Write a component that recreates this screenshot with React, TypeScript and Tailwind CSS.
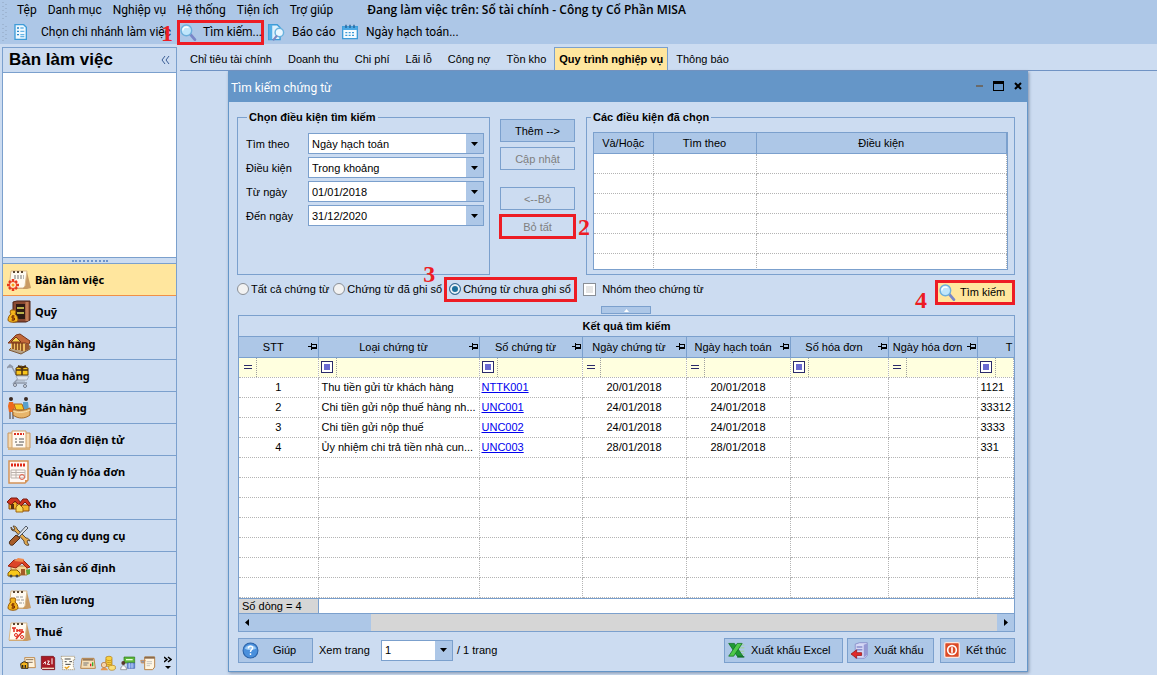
import type { ReactNode } from "react";
import { clsx } from "clsx";

const menuItems = ["Tệp", "Danh mục", "Nghiệp vụ", "Hệ thống", "Tiện ích", "Trợ giúp"];

const tabs = [
  "Chỉ tiêu tài chính",
  "Doanh thu",
  "Chi phí",
  "Lãi lỗ",
  "Công nợ",
  "Tồn kho",
  "Quy trình nghiệp vụ",
  "Thông báo",
];

const conditions = [
  { id: "field", label: "Tìm theo", value: "Ngày hạch toán" },
  { id: "operator", label: "Điều kiện", value: "Trong khoảng" },
  { id: "from", label: "Từ ngày", value: "01/01/2018" },
  { id: "to", label: "Đến ngày", value: "31/12/2020" },
];

const columns = [
  { name: "STT", filter: "equal" },
  { name: "Loại chứng từ", filter: "box" },
  { name: "Số chứng từ", filter: "box" },
  { name: "Ngày chứng từ", filter: "equal" },
  { name: "Ngày hạch toán", filter: "equal" },
  { name: "Số hóa đơn", filter: "box" },
  { name: "Ngày hóa đơn", filter: "equal" },
];

const vouchers = [
  { type: "Thu tiền gửi từ khách hàng", no: "NTTK001", date: "20/01/2018", account: "1121" },
  { type: "Chi tiền gửi nộp thuế hàng nh...", no: "UNC001", date: "24/01/2018", account: "33312" },
  { type: "Chi tiền gửi nộp thuế", no: "UNC002", date: "24/01/2018", account: "3333" },
  { type: "Ủy nhiệm chi trả tiền nhà cun...", no: "UNC003", date: "28/01/2018", account: "331" },
];

/* ---------- Icons ---------- */

function Svg({ size = 24, children }: { size?: number; children: ReactNode }) {
  return (
    <svg width={size} height={size} viewBox="0 0 24 24" fill="none" className="shrink-0" aria-hidden="true">
      {children}
    </svg>
  );
}

function Calendar() {
  return (
    <>
      <path d="M4 4h16l4 16-4 1H2z" fill="#c99a62" />
      <path d="M4 3h16l-2 15-2 2H2z" fill="#fffaf0" stroke="#d9b98a" />
      <path d="M6 4h2M10 4h2M14 4h2" stroke="#5c4630" strokeWidth="2" />
    </>
  );
}

function MoneyBag() {
  return (
    <>
      <path d="M3 12l1-2h4l1 2-1 2c2 1 3 4 3 6 0 3-10 3-10 0 0-2 1-5 3-6z" fill="#f4b41c" stroke="#9a5c0a" />
      <path d="M7.500 16H5v2h2.500v2H4.500M6 15v6" stroke="#7a2c00" />
    </>
  );
}

const moduleIcons = {
  desk: (
    <>
      <Calendar />
      <path d="M7 8h10M7 10h10" stroke="#777" strokeDasharray="2 1" />
      <g stroke="#e8381b" strokeWidth="2.500">
        <path d="M6 11v12M0 17h12M2 13l8 8M10 13l-8 8" />
      </g>
      <circle cx="6" cy="17" r="3.500" fill="#fff3d0" stroke="#e8381b" />
      <circle cx="6" cy="17" r="1.500" fill="#f4a01c" />
    </>
  ),
  safe: (
    <>
      <path d="M6 2l4-1h13v19l-4 2H6z" fill="#8b4a32" stroke="#4c2316" />
      <path d="M9 4h9v15H9z" fill="#2e1a14" />
      <path d="M10 8h7M10 13h7" stroke="#b8b04a" strokeWidth="2" />
      <path d="M20 2v19" stroke="#c07a55" strokeWidth="3" />
      <MoneyBag />
    </>
  ),
  bank: (
    <>
      <path d="M2 18l12 4 9-5v-3L5 15z" fill="#b7a184" stroke="#7d5a38" />
      <path d="M4 10h14v9L4 17z" fill="#f1c063" />
      <path d="M6 10v7M9 10v8M12 10v8M15 10v9" stroke="#7b3c14" strokeWidth="1.500" />
      <path d="M1 11l8-8 4-1 10 7-1 3-4-1z" fill="#c2693b" stroke="#7a3518" />
      <path d="M4 10l5-5 5 5z" fill="#f7d64b" stroke="#7a3518" />
      <path d="M18 12l4-1v6l-4 2z" fill="#9c5a30" />
    </>
  ),
  cart: (
    <>
      <path d="M0 4l3-3 3 2M1 3h4l6 11h10M12 14l-5 5h13M9 8l2 6" stroke="#8f98a8" strokeWidth="1.500" />
      <path d="M9 12h13l-2 4h-9zM10 17h8" fill="#dfe4ec" stroke="#a4adbb" />
      <path d="M9 4l5-2 7 2v7H9z" fill="#f8c51c" stroke="#5b3a08" />
      <path d="M15 3v8M9 6h12" stroke="#4b2e10" strokeWidth="1.500" />
      <path d="M11 2l4 2 4-2" stroke="#4b2e10" strokeWidth="2" />
      <circle cx="8" cy="21" r="1.500" fill="#dfe4ec" stroke="#70798a" />
      <circle cx="18" cy="22" r="1.500" fill="#dfe4ec" stroke="#70798a" />
    </>
  ),
  sell: (
    <>
      <circle cx="4" cy="3" r="2" fill="#3b2a22" />
      <path d="M2 6h4l2 5-1 5H2L1 10z" fill="#ee6a1e" />
      <path d="M3 16v7M6 16v7" stroke="#40302a" />
      <circle cx="19" cy="3" r="2" fill="#3b2a22" />
      <path d="M16 6h5l1 8h-6z" fill="#5aa0cc" />
      <path d="M7 8h8l2 6H9z" fill="#f6cc2a" stroke="#b5651a" />
      <path d="M6 13c4 2 11 2 17-1v7c-5 4-12 4-17 0z" fill="#e7b56b" stroke="#a56a2a" />
      <path d="M6 15c4 2 11 2 17-1" stroke="#fbe2ae" />
    </>
  ),
  einvoice: (
    <>
      <path d="M1 5h5v15H1zM18 5h5v15h-5z" fill="#f5d9b0" stroke="#c9965c" />
      <path d="M5 3h14v17H5z" fill="#fffaf2" stroke="#d2a46c" />
      <path d="M7 6h10" stroke="#dc3020" strokeWidth="2" strokeDasharray="2 1" />
      <path d="M8 11h2M12 11h5M8 14h2M12 14h5M9 17h7" stroke="#555" />
      <path d="M1 21h22" stroke="#d9b27c" strokeWidth="2" />
    </>
  ),
  invoice: (
    <>
      <path d="M2 1h19v19l-3 3H2z" fill="#fff8f4" stroke="#d39358" strokeWidth="1.500" />
      <path d="M4 5h15" stroke="#e02818" strokeWidth="3" strokeDasharray="2 1" />
      <path d="M4 10h14v8H4zM4 12.500h14M4 15h14M9 10v8" stroke="#bbb2ac" />
      <circle cx="15" cy="17" r="2.500" stroke="#e2604a" />
      <path d="M18 23v-3h3z" fill="#d39358" />
    </>
  ),
  stock: (
    <>
      <path d="M2 10h8v7H2z" fill="#f3b42a" stroke="#8c4a10" />
      <path d="M0 10l4-4h6l4 5-2 2-4-4-4 4z" fill="#cf3420" stroke="#7a1a0e" />
      <path d="M4 12h3v5H4z" fill="#5b3010" />
      <path d="M14 13h8v6h-8z" fill="#f3b42a" stroke="#8c4a10" />
      <path d="M12 12l4-5h4l4 6-2 1-4-4-4 4z" fill="#cf3420" stroke="#7a1a0e" />
      <path d="M9 15l3-3 4 4v4H9z" fill="#f8d85c" stroke="#a0640e" />
    </>
  ),
  tools: (
    <>
      <path
        d="M4 3c0 3 1 4 4 4l9 10c0 3 2 5 5 4l-2-3 1-2 2 1c-1-2-2-3-4-3L10 5c0-2-2-3-4-3l2 3-2 1z"
        fill="#e3a94c"
        stroke="#5a4a38"
      />
      <path d="M19 2l2 2-9 9-2-1z" fill="#dbe0e6" stroke="#4f5966" />
      <path d="M9 11l4 3-7 7c-2 1-5-1-3-4z" fill="#a85c28" stroke="#4c2e18" />
    </>
  ),
  asset: (
    <>
      <path d="M4 10h16v9H4z" fill="#f5d495" stroke="#b07a3a" />
      <path d="M1 10l6-6h9l7 7-3 1-5-5-6 5z" fill="#dc4428" stroke="#9a2412" />
      <path d="M7 5l4-3 6 1-1 3z" fill="#f08a4c" />
      <path d="M14 13h4v6h-4z" fill="#a45c28" />
      <path d="M19 14l4-1v5l-3 1z" fill="#58a838" />
      <path d="M1 17l3-3h6l3 3v3H1z" fill="#f8c81c" stroke="#8a5c08" />
      <circle cx="4" cy="20" r="1.500" fill="#444" />
      <circle cx="10" cy="20" r="1.500" fill="#444" />
    </>
  ),
  salary: (
    <>
      <Calendar />
      <path d="M9 9h8M10 12h7M12 15h5" stroke="#999" strokeDasharray="3 1" />
      <MoneyBag />
    </>
  ),
  tax: (
    <>
      <Calendar />
      <path d="M5 8h4M7 8v4M10 9v3M10 10.500h3M13 9v3M15 9v3h2" stroke="#e22a1a" strokeWidth="1.500" />
      <path d="M15 12l-6 7" stroke="#e22a1a" strokeWidth="1.500" />
      <circle cx="9" cy="15" r="1.500" stroke="#e22a1a" />
      <circle cx="15" cy="17" r="1.500" stroke="#e22a1a" />
    </>
  ),
};

const modules: { name: string; icon: keyof typeof moduleIcons }[] = [
  { name: "Bàn làm việc", icon: "desk" },
  { name: "Quỹ", icon: "safe" },
  { name: "Ngân hàng", icon: "bank" },
  { name: "Mua hàng", icon: "cart" },
  { name: "Bán hàng", icon: "sell" },
  { name: "Hóa đơn điện tử", icon: "einvoice" },
  { name: "Quản lý hóa đơn", icon: "invoice" },
  { name: "Kho", icon: "stock" },
  { name: "Công cụ dụng cụ", icon: "tools" },
  { name: "Tài sản cố định", icon: "asset" },
  { name: "Tiền lương", icon: "salary" },
  { name: "Thuế", icon: "tax" },
];

const shortcuts: { name: string; icon: ReactNode }[] = [
  {
    name: "Giá thành",
    icon: (
      <>
        <path d="M7 4h15l1 15H9z" fill="#fff4dc" stroke="#c08a4c" strokeWidth="1.500" />
        <path d="M9 7h11M11 11h8" stroke="#8a7258" strokeWidth="1.500" />
        <path d="M1 13l5-3 6 2v8H2z" fill="#f4b41c" stroke="#3a2a10" strokeWidth="1.500" />
        <path d="M4 15v4M8 15v4" stroke="#222" strokeWidth="2" />
      </>
    ),
  },
  {
    name: "Sổ cái",
    icon: (
      <>
        <path d="M2 2h18l2 2v18H4l-2-2z" fill="#a81a24" stroke="#6e0c14" />
        <path d="M3 20h18" stroke="#f1d8c0" strokeWidth="2" />
        <path d="M5 13l3-3v4M11 9h3l-3 5h4M18 5v9" stroke="#fff" strokeWidth="1.500" />
      </>
    ),
  },
  {
    name: "Hợp đồng",
    icon: (
      <>
        <path d="M2 2h20v5h-2v10l2 5H4V7H2z" fill="#fffdf4" stroke="#8d7650" strokeDasharray="2 1" />
        <path d="M7 6h9M7 10h3M14 10h4M8 14h8" stroke="#444" strokeWidth="1.500" />
        <path d="M7 18l3 2 4-3" stroke="#e8a01c" strokeWidth="2" />
      </>
    ),
  },
  {
    name: "Ngân sách",
    icon: (
      <>
        <path d="M3 5h18l2 15H1z" fill="#f6e0b8" stroke="#b98448" strokeWidth="1.500" />
        <path d="M4 7h16" stroke="#9a7a58" strokeWidth="3" />
        <path d="M5 12h8M5 15h6" stroke="#777" strokeWidth="1.500" />
        <path d="M15 13h2v4h-2z" fill="#d22" />
        <path d="M18 11h2v6h-2z" fill="#3a3" />
      </>
    ),
  },
  {
    name: "Thủ quỹ",
    icon: (
      <>
        <path d="M9 3c4-2 9-1 9 1v13H8z" fill="#f8d040" stroke="#b07a10" />
        <path d="M9 7c3 2 7 2 9 0M9 10c3 2 7 2 9 0M9 13c3 2 7 2 9 0" stroke="#b07a10" />
        <circle cx="6" cy="15" r="4" fill="#f6d4a8" stroke="#a4642c" />
        <path d="M1 23c0-5 10-5 11 0z" fill="#e8964c" />
        <path d="M13 17c3-2 9-2 10 0v4c-3 3-9 2-10 0z" fill="#fbe07a" stroke="#b07a10" />
      </>
    ),
  },
  {
    name: "Thủ kho",
    icon: (
      <>
        <path d="M6 3h16v9H6z" fill="#5cb83c" stroke="#2f7a1a" />
        <path d="M9 7h10" stroke="#e8ffd8" strokeWidth="2" />
        <path d="M11 12h11v8H11z" fill="#7a9ce0" stroke="#3c5caa" />
        <path d="M14 12v8M18 12v8" stroke="#dce6ff" />
        <circle cx="5" cy="12" r="3" fill="#5a3a2a" />
        <path d="M1 22c0-8 8-8 9 0z" fill="#fafafa" stroke="#777" />
      </>
    ),
  },
  {
    name: "Nhật ký",
    icon: (
      <>
        <path d="M7 3h15v15l-3 4H7z" fill="#fff6e4" stroke="#b98448" strokeWidth="1.500" />
        <path d="M7 4h15" stroke="#8d6b4a" strokeWidth="3" />
        <path d="M10 10h8M10 13h8M10 16h5" stroke="#aaa" />
        <path d="M1 8h7l-2 4H2z" fill="#8a98b0" stroke="#e08a3a" />
      </>
    ),
  },
];

function SearchIcon() {
  return (
    <Svg size={17}>
      <path d="M15 15l6 7" stroke="#7a86c8" strokeWidth="4" strokeLinecap="round" />
      <circle cx="9" cy="9" r="7.500" fill="#bfe6fb" stroke="#6db0dc" strokeWidth="2" />
      <path d="M4 9c0-4 4-6 8-4" stroke="#fff" strokeWidth="2" />
    </Svg>
  );
}

function BranchIcon() {
  return (
    <Svg size={16}>
      <path d="M3 1h13l4 4v18H3z" fill="#eef8ff" stroke="#3d9bd8" strokeWidth="2" />
      <path d="M6 6h3M6 11h3M6 16h3" stroke="#2b86c8" strokeWidth="2" />
      <path d="M11 6h5M11 11h6M11 16h6M11 19h6" stroke="#67b4e4" strokeWidth="2" />
    </Svg>
  );
}

function ReportIcon() {
  return (
    <Svg size={17}>
      <path d="M1 1h12l4 4v17H1z" fill="#dff1fd" stroke="#3d9bd8" strokeWidth="2" />
      <path d="M1 1h5v21H1z" fill="#54aee6" />
      <circle cx="16" cy="12" r="6" fill="#eaf7ff" stroke="#6ab2de" strokeWidth="2" />
      <path d="M12 17l-4 5" stroke="#7f86c0" strokeWidth="3" strokeLinecap="round" />
    </Svg>
  );
}

function DateIcon() {
  return (
    <Svg size={16}>
      <path d="M1 4h22v18H1z" fill="#f4fbff" stroke="#3d9bd8" strokeWidth="2" />
      <path d="M1 4h22v5H1z" fill="#4aa8e4" />
      <path d="M6 1v5M12 1v5M18 1v5" stroke="#245f94" strokeWidth="2" />
      <path d="M5 13h15M5 17h15" stroke="#3d9bd8" strokeWidth="2" strokeDasharray="3 2" />
    </Svg>
  );
}

function HelpIcon() {
  return (
    <Svg size={17}>
      <circle cx="12" cy="12" r="10.500" fill="#4a90dc" stroke="#2a62a8" strokeWidth="1.500" />
      <path d="M4 9c2-6 14-6 16 0-4 3-12 3-16 0z" fill="#9ccaf4" />
      <path d="M9 9c0-4 6-4 6-1 0 3-3 3-3 6M12 16v2.500" stroke="#fff" strokeWidth="2" />
    </Svg>
  );
}

function ExcelIcon() {
  return (
    <Svg size={17}>
      <path d="M14 4h9M14 8h9M15 13h8M14 17h9" stroke="#a4cfae" strokeWidth="2" />
      <path d="M1 2h8l12 18h-8z" fill="#1f9a34" stroke="#0c6a1c" />
      <path d="M20 2h-7L1 20h7z" fill="#4fca4a" stroke="#0c6a1c" />
      <path d="M13 21h10" stroke="#0c6a1c" strokeWidth="2" />
    </Svg>
  );
}

function ExportIcon() {
  return (
    <Svg size={17}>
      <path d="M6 3l6-2h11v18l-4 4H6z" fill="#d5d8f6" stroke="#7b7fc0" />
      <path d="M18 4v18l5-4V2z" fill="#9699d4" />
      <path d="M8 7h8M8 11h8" stroke="#8b8fcc" strokeWidth="2" />
      <path d="M0 17l8-6v4h7v4H8v4z" fill="#e22a2a" stroke="#8e1010" />
    </Svg>
  );
}

function PowerIcon() {
  return (
    <Svg size={16}>
      <rect x="1" y="1" width="22" height="22" rx="2" fill="#dc4a26" stroke="#fbe4dc" strokeWidth="2" />
      <circle cx="12" cy="12" r="6.500" stroke="#fff" strokeWidth="2.500" />
      <path d="M12 8v8" stroke="#fff" strokeWidth="2.500" />
    </Svg>
  );
}

function PinIcon() {
  return (
    <svg width="9" height="9" viewBox="0 0 9 9" shapeRendering="crispEdges" className="shrink-0" aria-hidden="true">
      <path d="M0 4h3V1h1v1h5v5H4v1H3V5H0zM4 3v2h4V3z" fillRule="evenodd" />
    </svg>
  );
}

/* ---------- Small pieces ---------- */

function Step({ n, className }: { n: number; className: string }) {
  return (
    <span
      className={clsx(
        "pointer-events-none absolute z-10 font-['Liberation_Serif',serif] text-2xl leading-6 font-bold text-[#ed1c24]",
        className
      )}
    >
      {n}
    </span>
  );
}

function Dropdown({ id, value, className }: { id: string; value: string; className?: string }) {
  return (
    <div className={clsx("relative h-[21px] border border-[#7ba0cd] bg-white", className)}>
      <select id={id} defaultValue={value} className="block h-[19px] w-full appearance-none pr-5 pl-[3px] outline-none">
        <option>{value}</option>
      </select>
      <span className="pointer-events-none absolute inset-y-0 right-0 flex w-[17px] items-center justify-center bg-[#adc7e7]">
        <svg width="7" height="4" viewBox="0 0 7 4" aria-hidden="true">
          <path d="M0 0h7L3.500 4z" />
        </svg>
      </span>
    </div>
  );
}

function Button({ children, className, disabled }: { children: ReactNode; className?: string; disabled?: boolean }) {
  return (
    <button
      type="button"
      disabled={disabled}
      className={clsx(
        "flex items-center border border-[#7ba0cd]",
        disabled ? "bg-[#ccdcf1] text-[#7f7f7f]" : "bg-[#adc7e7]",
        className
      )}
    >
      {children}
    </button>
  );
}

function Filter({ kind }: { kind: string }) {
  return (
    <div className="flex h-[19px] items-center">
      <span className="flex h-full w-[18px] items-center justify-center border-r border-dotted border-[#a0a0a0]">
        {kind === "equal" ? (
          <span className="h-1 w-2 border-y border-[#2a2a6a]" />
        ) : (
          <span className="size-3 border border-[#2a2a6a] bg-[#6a6ad0] ring-2 ring-white ring-inset" />
        )}
      </span>
    </div>
  );
}

function Radio({ label, checked }: { label: string; checked?: boolean }) {
  return (
    <label className="flex items-center gap-[2px] whitespace-nowrap">
      <input
        type="radio"
        name="posting"
        defaultChecked={checked}
        className="size-3 appearance-none rounded-full border border-[#8a8f96] bg-[#f2f2f2] checked:border-[#3d6a94] checked:bg-[#1d6f9c] checked:ring-2 checked:ring-[#e8f0f6] checked:ring-inset"
      />
      {label}
    </label>
  );
}

/* ---------- Layout ---------- */

function Grip() {
  return (
    <svg width="17" height="18" className="shrink-0" aria-hidden="true">
      <path d="M3 1v17M6 3v15" stroke="#8fa3bd" strokeWidth="1" strokeDasharray="1 3" />
    </svg>
  );
}

function TopBar() {
  return (
    <header className="bg-[#adc7e7] font-[Roboto,'Open_Sans',sans-serif] text-xs">
      <div className="flex h-5 items-center whitespace-nowrap">
        <Grip />
        <nav className="flex gap-[11px]">
          {menuItems.map((item) => (
            <button type="button" key={item}>
              {item}
            </button>
          ))}
        </nav>
        <span className="ml-[34px] font-['Open_Sans','Noto_Sans',sans-serif] font-semibold">
          Đang làm việc trên: Sổ tài chính - Công ty Cổ Phần MISA
        </span>
      </div>
      <div className="flex h-6 items-center whitespace-nowrap">
        <div className="flex w-[177px] shrink-0 items-center">
          <Grip />
          <button type="button" className="-ml-1 flex items-center gap-3">
            <BranchIcon />
            Chọn chi nhánh làm việc
          </button>
        </div>
        <div className="relative shrink-0">
          <Step n={1} className="-left-4 top-px" />
          <button type="button" className="flex h-[25px] w-[87px] items-center gap-1.5 border-3 border-[#ed1c24]">
            <SearchIcon />
            Tìm kiếm...
          </button>
        </div>
        <button type="button" className="ml-1 flex w-[74px] items-center gap-[7px]">
          <ReportIcon />
          Báo cáo
        </button>
        <button type="button" className="flex items-center gap-2">
          <DateIcon />
          Ngày hạch toán...
        </button>
      </div>
    </header>
  );
}

function Sidebar() {
  return (
    <aside className="flex w-[175px] shrink-0 flex-col border border-[#7ba0cd] font-['Noto_Sans','Open_Sans',sans-serif]">
      <div className="flex h-[25px] items-center justify-between border-b border-[#7ba0cd] px-1.5">
        <h1 className="font-['Liberation_Sans',sans-serif] text-[17px] leading-6 font-bold">Bàn làm việc</h1>
        <button type="button" aria-label="Thu gọn">
          <svg width="9" height="8" fill="none" stroke="#3a5d94" aria-hidden="true">
            <path d="M4 0L1 4l3 4M8 0L5 4l3 4" />
          </svg>
        </button>
      </div>
      <div className="min-h-[184px] grow bg-white" />
      <div className="flex h-[7px] items-center justify-center border-y border-[#7ba0cd]">
        <span className="w-9 border-t-2 border-dotted border-[#6d94cc]" />
      </div>
      <nav>
        {modules.map((m, i) => (
          <a
            key={m.name}
            href="#"
            className={clsx(
              "flex h-8 items-center gap-1 border-b pl-1 font-bold",
              i === 0 ? "border-[#f09048] bg-[#ffe69e]" : "border-[#7ba0cd]"
            )}
          >
            <Svg>{moduleIcons[m.icon]}</Svg>
            {m.name}
          </a>
        ))}
      </nav>
      <div className="flex h-[30px] items-center justify-end gap-1 pr-1">
        {shortcuts.map((s) => (
          <button type="button" key={s.name} aria-label={s.name}>
            <Svg size={16}>{s.icon}</Svg>
          </button>
        ))}
        <button type="button" aria-label="Thêm" className="ml-1">
          <svg width="8" height="14" viewBox="0 0 8 14" aria-hidden="true">
            <path d="M0 1l3 2.500L0 6M4 1l3 2.500L4 6" fill="none" stroke="#000" strokeWidth="1.500" />
            <path d="M1 10h6l-3 3z" />
          </svg>
        </button>
      </div>
    </aside>
  );
}

function Tabs() {
  return (
    <nav className="flex h-6 border-b border-[#7093c4] pl-[2px] whitespace-nowrap">
      {tabs.map((tab) => (
        <button
          type="button"
          key={tab}
          className={
            tab === "Quy trình nghiệp vụ"
              ? "border-x border-t border-[#7ba0cd] bg-[#ffe69e] px-1 font-bold"
              : "px-2"
          }
        >
          {tab}
        </button>
      ))}
    </nav>
  );
}

function Conditions() {
  return (
    <div className="flex gap-[10px]">
      <fieldset className="h-[166px] w-[253px] shrink-0 border border-[#7ba0cd] px-[5px] pb-1">
        <legend className="ml-1 px-0.5 font-bold">Chọn điều kiện tìm kiếm</legend>
        <div className="flex flex-col gap-[3px] pt-2">
          {conditions.map((c) => (
            <div key={c.id} className="flex items-center">
              <label htmlFor={c.id} className="w-[65px] pl-[3px]">
                {c.label}
              </label>
              <Dropdown id={c.id} value={c.value} className="grow" />
            </div>
          ))}
        </div>
      </fieldset>
      <div className="flex w-[75px] shrink-0 flex-col gap-[5px] pt-[10px]">
        <Button className="h-[23px] justify-center">Thêm --&gt;</Button>
        <Button disabled className="h-[23px] justify-center">
          Cập nhật
        </Button>
        <Button disabled className="mt-3 h-[23px] justify-center">
          &lt;--Bỏ
        </Button>
        <div className="relative">
          <Button disabled className="h-[23px] w-full justify-center outline-3 -outline-offset-2 outline-[#ed1c24]">
            Bỏ tất
          </Button>
          <Step n={2} className="left-[78px] top-0" />
        </div>
      </div>
      <fieldset className="ml-px h-[166px] min-w-0 grow border border-[#7ba0cd] px-1.5 pb-1">
        <legend className="-ml-0.5 px-0.5 font-bold">Các điều kiện đã chọn</legend>
        <div className="mt-[7px] h-[138px] overflow-hidden border border-[#7ba0cd] bg-white">
          <table className="w-full table-fixed border-collapse">
            <thead>
              <tr className="h-5 bg-[#adc7e7]">
                <th className="w-[59px] border-r border-b border-[#7ba0cd] p-0 font-normal">Và/Hoặc</th>
                <th className="w-[103px] border-r border-b border-[#7ba0cd] p-0 font-normal">Tìm theo</th>
                <th className="border-r border-b border-[#7ba0cd] p-0 font-normal">Điều kiện</th>
              </tr>
            </thead>
            <tbody>
              {[0, 1, 2, 3, 4, 5].map((row) => (
                <tr key={row} className="h-5">
                  {[0, 1, 2].map((col) => (
                    <td key={col} className="border-r border-b border-dotted border-[#b4b4b4] p-0" />
                  ))}
                </tr>
              ))}
            </tbody>
          </table>
        </div>
      </fieldset>
    </div>
  );
}

function Options() {
  return (
    <div className="flex h-7 items-center">
      <div className="flex items-center gap-1">
        <Radio label="Tất cả chứng từ" />
        <Radio label="Chứng từ đã ghi sổ" />
      </div>
      <div className="relative ml-0.5">
        <Step n={3} className="-left-[21px] -top-[15px]" />
        <div className="flex h-[25px] w-[133px] items-center border-3 border-[#ed1c24] pl-[2px]">
          <Radio label="Chứng từ chưa ghi sổ" checked />
        </div>
      </div>
      <label className="ml-1.5 flex items-center gap-1.5">
        <input
          type="checkbox"
          className="size-[13px] appearance-none border border-[#8a8f96] bg-[#e6e6e6] ring-2 ring-white ring-inset"
        />
        Nhóm theo chứng từ
      </label>
      <div className="relative mt-1.5 ml-auto">
        <Step n={4} className="-left-5 top-2" />
        <button
          type="button"
          className="flex h-[25px] w-20 items-center gap-1 border-3 border-[#ed1c24] bg-[#ffe69e] pl-px"
        >
          <SearchIcon />
          Tìm kiếm
        </button>
      </div>
    </div>
  );
}

const cell = "overflow-hidden border-r border-b border-dotted border-[#b4b4b4] p-0 text-ellipsis whitespace-nowrap";

function Results() {
  return (
    <section className="border border-[#7ba0cd]">
      <h2 className="h-5 text-center leading-5 font-bold">Kết quả tìm kiếm</h2>
      <div className="overflow-hidden border-t border-[#7ba0cd] bg-white">
        <table className="w-full table-fixed border-collapse">
          <colgroup>
            <col className="w-[79px]" />
            <col className="w-[161px]" />
            <col className="w-[103px]" />
            <col className="w-[104px]" />
            <col className="w-[104px]" />
            <col className="w-[98px]" />
            <col className="w-[89px]" />
            <col />
          </colgroup>
          <thead>
            <tr className="h-5 bg-[#adc7e7]">
              {columns.map((c) => (
                <th key={c.name} className="border-r border-b border-[#7ba0cd] p-0 font-normal whitespace-nowrap">
                  <div className="flex items-center pr-px">
                    <span className="grow text-center">{c.name}</span>
                    <PinIcon />
                  </div>
                </th>
              ))}
              <th className="border-b border-[#7ba0cd] p-0 pr-px text-right font-normal">T</th>
            </tr>
          </thead>
          <tbody>
            <tr className="h-5 bg-[#ffffdf]">
              {columns.map((c) => (
                <td key={c.name} className={cell}>
                  <Filter kind={c.filter} />
                </td>
              ))}
              <td className={cell}>
                <Filter kind="box" />
              </td>
            </tr>
            {vouchers.map((v, i) => (
              <tr key={v.no} className="h-5">
                <td className={clsx(cell, "text-center")}>{i + 1}</td>
                <td className={clsx(cell, "pl-[3px]")}>{v.type}</td>
                <td className={clsx(cell, "pl-0.5")}>
                  <a href="#" className="text-[#0000ee] underline">
                    {v.no}
                  </a>
                </td>
                <td className={clsx(cell, "text-center")}>{v.date}</td>
                <td className={clsx(cell, "text-center")}>{v.date}</td>
                <td className={cell} />
                <td className={cell} />
                <td className={clsx(cell, "pl-[3px]")}>{v.account}</td>
              </tr>
            ))}
            {[0, 1, 2, 3, 4, 5, 6].map((row) => (
              <tr key={row} className="h-5">
                {[0, 1, 2, 3, 4, 5, 6, 7].map((col) => (
                  <td key={col} className={cell} />
                ))}
              </tr>
            ))}
          </tbody>
        </table>
      </div>
      <div className="flex h-4 border-y border-[#7ba0cd] bg-white">
        <span className="w-20 border-r border-[#7ba0cd] bg-[#d6d6d6] pl-[3px] leading-[14px]">Số dòng = 4</span>
      </div>
      <div className="flex h-[17px] items-center bg-[#d6d6d6]">
        <button type="button" aria-label="Cuộn trái" className="flex h-full w-[132px] items-center bg-[#adc7e7] pl-1.5">
          <svg width="4" height="7" aria-hidden="true">
            <path d="M4 0v7L0 3.500z" />
          </svg>
        </button>
        <button
          type="button"
          aria-label="Cuộn phải"
          className="ml-auto flex h-full w-[17px] items-center justify-center bg-[#adc7e7]"
        >
          <svg width="4" height="7" aria-hidden="true">
            <path d="M0 0v7l4-3.500z" />
          </svg>
        </button>
      </div>
    </section>
  );
}

function SearchDialog() {
  return (
    <section className="ml-12 w-full max-w-[800px] border border-t-0 border-[#6596c8] shadow-[1px_1px_3px_#7f8fa8]">
      <div className="flex h-[31px] items-center bg-[#6596c8] px-[2px] font-[Roboto,'Open_Sans',sans-serif] text-xs text-white">
        <h2 className="pt-0.5">Tìm kiếm chứng từ</h2>
        <div className="mr-[3px] mb-[2px] ml-auto flex items-center gap-[10px]">
          <button type="button" aria-label="Thu nhỏ" className="h-0.5 w-[7px] bg-[#6a6a6a]" />
          <button type="button" aria-label="Phóng to" className="h-[10px] w-[11px] border border-t-3 border-black" />
          <button type="button" aria-label="Đóng">
            <svg width="8" height="8" viewBox="0 0 8 8" stroke="#000" strokeWidth="2" aria-hidden="true">
              <path d="M1 1l6 6M7 1L1 7" />
            </svg>
          </button>
        </div>
      </div>
      <div className="pt-[7px] pr-3 pb-2 pl-2">
        <Conditions />
        <Options />
        <button
          type="button"
          aria-label="Thu gọn điều kiện"
          className="mx-auto mt-[3px] flex h-2 w-[50px] items-center justify-center border border-[#7ba0cd] bg-[#adc7e7]"
        >
          <svg width="5" height="3" aria-hidden="true">
            <path d="M0 3h5L2.500 0z" fill="#fff" />
          </svg>
        </button>
        <div className="pt-px pl-px">
          <Results />
          <footer className="mt-1.5 flex items-center">
            <Button className="h-[25px] w-[75px] gap-[14px] pl-[3px]">
              <HelpIcon />
              Giúp
            </Button>
            <label htmlFor="page" className="ml-1.5 w-[62px]">
              Xem trang
            </label>
            <Dropdown id="page" value="1" className="w-[72px]" />
            <span className="ml-1">/ 1 trang</span>
            <Button className="ml-auto h-[25px] w-[119px] gap-[6px] pl-[3px]">
              <ExcelIcon />
              Xuất khẩu Excel
            </Button>
            <Button className="ml-1 h-[25px] w-[87px] gap-[6px] pl-[3px]">
              <ExportIcon />
              Xuất khẩu
            </Button>
            <Button className="ml-1.5 h-[25px] w-[75px] gap-[6px] pl-[3px]">
              <PowerIcon />
              Kết thúc
            </Button>
          </footer>
        </div>
      </div>
    </section>
  );
}

export default function App() {
  return (
    <div className="flex min-h-screen flex-col bg-[#ccdcf1] font-['Liberation_Sans',sans-serif] text-[11px] leading-4 text-black">
      <TopBar />
      <div className="flex grow pt-[3px] pl-[2px]">
        <Sidebar />
        <main className="min-w-0 grow pl-[3px]">
          <Tabs />
          <SearchDialog />
        </main>
      </div>
    </div>
  );
}
